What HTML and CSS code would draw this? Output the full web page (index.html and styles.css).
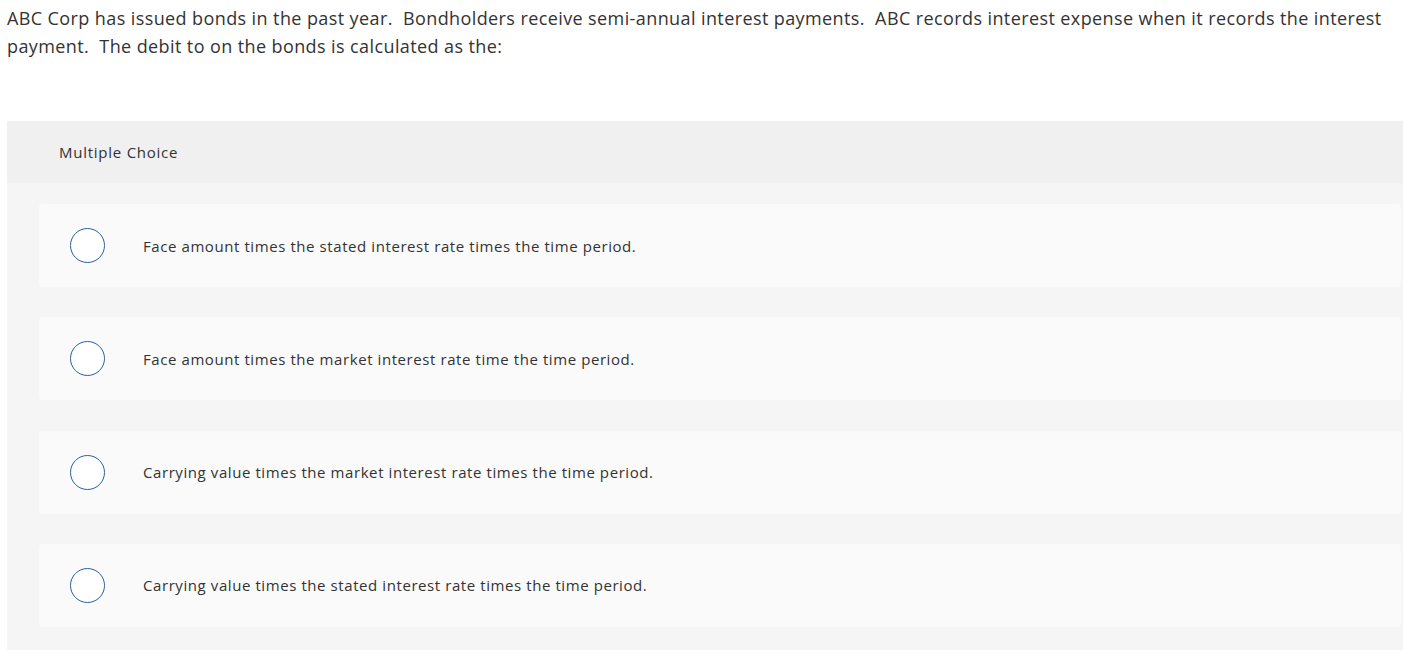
FILE: index.html
```html
<!DOCTYPE html>
<html>
<head>
<meta charset="utf-8">
<link rel="stylesheet" href="styles.css">
</head>
<body>
<div class="question">ABC Corp has issued bonds in the past year.&nbsp; Bondholders receive semi-annual interest payments.&nbsp; ABC records interest expense when it records the interest payment.&nbsp; The debit to on the bonds is calculated as the:</div>
<div class="panel">
  <div class="panel-head">Multiple Choice</div>
  <div class="panel-body">
    <div class="option"><span class="radio"></span><span class="label">Face amount times the stated interest rate times the time period.</span></div>
    <div class="option"><span class="radio"></span><span class="label">Face amount times the market interest rate time the time period.</span></div>
    <div class="option"><span class="radio"></span><span class="label">Carrying value times the market interest rate times the time period.</span></div>
    <div class="option"><span class="radio"></span><span class="label">Carrying value times the stated interest rate times the time period.</span></div>
  </div>
</div>
</body>
</html>
```
FILE: styles.css
```css
html, body {
  margin: 0;
  padding: 0;
  background: #fff;
}
body {
  font-family: "Open Sans", "Liberation Sans", sans-serif;
  color: #333;
  overflow: hidden;
}
.question {
  font-size: 18px;
  line-height: 28px;
  letter-spacing: 0.4px;
  padding: 4px 2px 0 7px;
  height: 121px;
  box-sizing: border-box;
}
.panel {
  margin-left: 7px;
}
.panel-head {
  background: #f0f0f0;
  height: 62px;
  display: flex;
  align-items: center;
  padding-left: 52px;
  font-size: 15px;
  letter-spacing: 0.75px;
  color: #333;
}
.panel-body {
  background: #f5f5f5;
  padding: 21px 2px 23px 32px;
  display: flex;
  flex-direction: column;
  gap: 30.33px;
}
.option {
  background: #fafafa;
  border-radius: 4px;
  height: 83px;
  display: flex;
  align-items: center;
  padding-left: 31px;
}
.radio {
  width: 33px;
  height: 33px;
  border: 1px solid #2c5f9a;
  border-radius: 50%;
  background: #fff;
  flex: none;
}
.label {
  margin-left: 38px;
  font-size: 15px;
  letter-spacing: 0.58px;
  color: #333;
}
```
